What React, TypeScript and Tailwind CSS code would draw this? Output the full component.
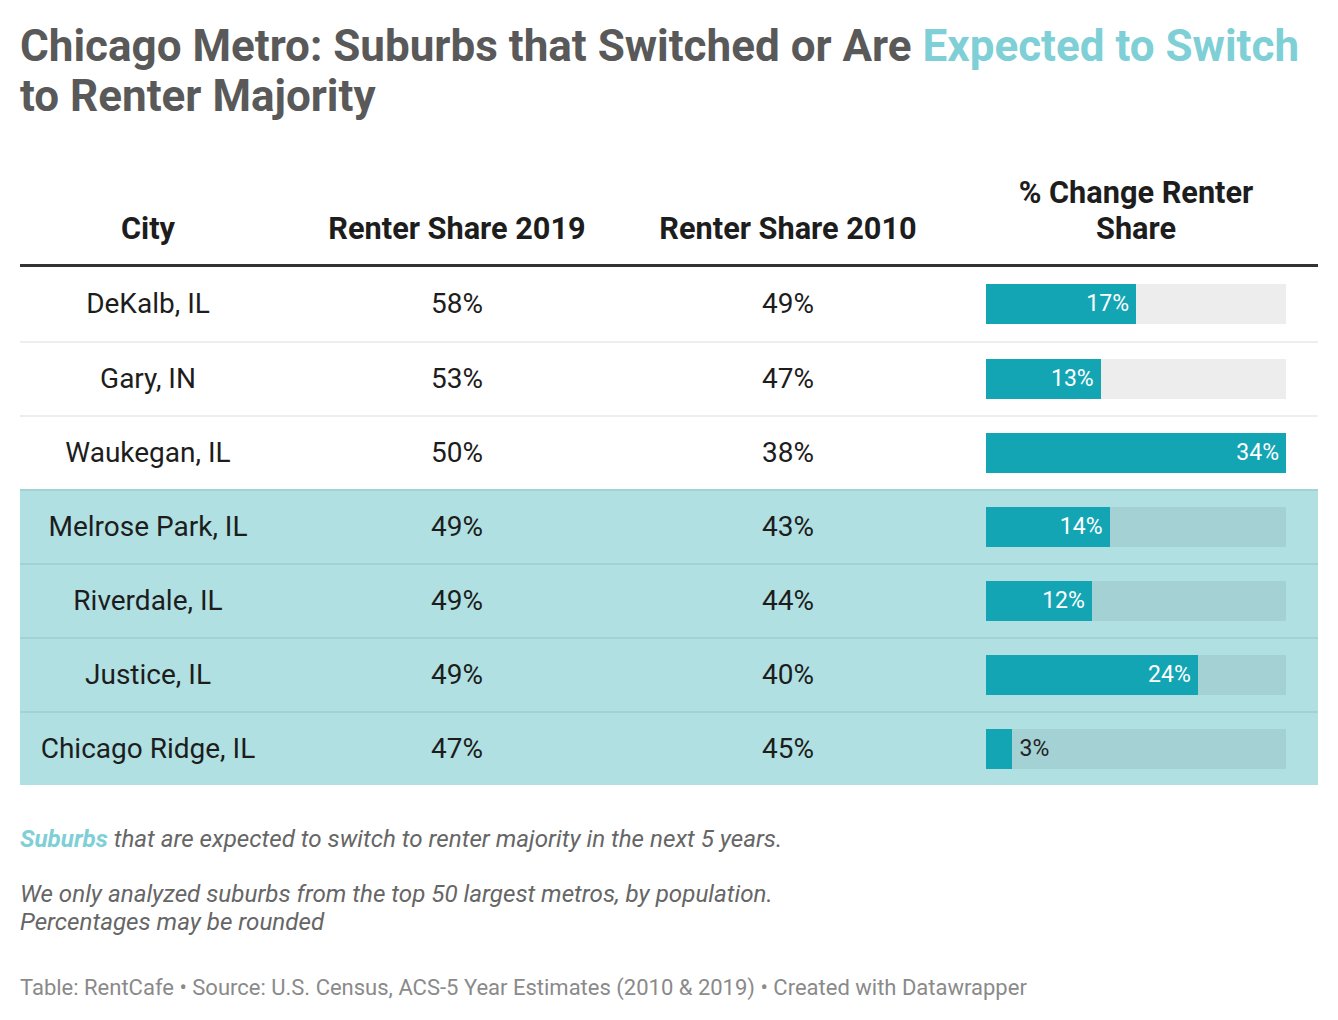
import React from "react";

interface Row {
  city: string;
  share2019: string;
  share2010: string;
  change: number;
  expected: boolean;
}

const rows: Row[] = [
  { city: "DeKalb, IL", share2019: "58%", share2010: "49%", change: 17, expected: false },
  { city: "Gary, IN", share2019: "53%", share2010: "47%", change: 13, expected: false },
  { city: "Waukegan, IL", share2019: "50%", share2010: "38%", change: 34, expected: false },
  { city: "Melrose Park, IL", share2019: "49%", share2010: "43%", change: 14, expected: true },
  { city: "Riverdale, IL", share2019: "49%", share2010: "44%", change: 12, expected: true },
  { city: "Justice, IL", share2019: "49%", share2010: "40%", change: 24, expected: true },
  { city: "Chicago Ridge, IL", share2019: "47%", share2010: "45%", change: 3, expected: true },
];

const MAX = 34;

const Bar: React.FC<{ value: number; expected: boolean }> = ({ value, expected }) => {
  const pct = (value / MAX) * 100;
  const inside = value >= 8;
  return (
    <div
      className={`ml-[48px] flex h-[40px] w-[300px] ${
        expected ? "bg-[#a3d1d4]" : "bg-[#ededed]"
      }`}
    >
      <div
        className="flex h-full items-center justify-end bg-[#14a5b4] pr-[7px] text-white"
        style={{ width: `${pct}%` }}
      >
        {inside && `${value}%`}
      </div>
      {!inside && <div className="flex h-full items-center pl-[7px] text-[#222]">{value}%</div>}
    </div>
  );
};

export default function App() {
  return (
    <div className="min-h-[1020px] bg-white px-[20px] pt-[21px] font-['Roboto',sans-serif]">
      <h1 className="text-[44px] font-bold leading-[50px] text-[#595959]">
        Chicago Metro: Suburbs that Switched or Are{" "}
        <span className="text-[#7ecfd6]">Expected to Switch</span> to Renter Majority
      </h1>

      <div className="mt-[54px] w-[1298px]">
        <div className="grid grid-cols-[256px_362px_300px_380px] items-end border-b-[3px] border-[#333] pb-[17px] text-[30.7px] font-bold leading-[36px] text-[#1d1d1d]">
          <div className="text-center">City</div>
          <div className="text-center">Renter Share 2019</div>
          <div className="text-center">Renter Share 2010</div>
          <div className="pl-[48px] pr-[32px] text-center">
            % Change Renter
            <br />
            Share
          </div>
        </div>

        {rows.map((r, i) => (
          <div
            key={r.city}
            className={`grid h-[74px] grid-cols-[256px_362px_300px_380px] items-center text-[28px] text-[#1d1d1d] ${
              r.expected ? "bg-[#b0e0e2]" : "bg-white"
            } ${
              i === 0
                ? ""
                : r.expected
                ? "border-t-[2px] border-[#a2d2d4]"
                : "border-t-[2px] border-[#eeeeee]"
            }`}
          >
            <div className="text-center">{r.city}</div>
            <div className="text-center">{r.share2019}</div>
            <div className="text-center">{r.share2010}</div>
            <div className="text-[23px]">
              <Bar value={r.change} expected={r.expected} />
            </div>
          </div>
        ))}
      </div>

      <div className="mt-[40px] text-[24.2px] italic leading-[28px] text-[#666]">
        <p>
          <span className="font-bold text-[#7ecfd6]">Suburbs</span> that are expected to switch to
          renter majority in the next 5 years.
        </p>
        <p className="mt-[27px]">
          We only analyzed suburbs from the top 50 largest metros, by population.
          <br />
          Percentages may be rounded
        </p>
      </div>

      <p className="mt-[35px] text-[22px] text-[#8a8a8a]">
        Table: RentCafe • Source: U.S. Census, ACS-5 Year Estimates (2010 &amp; 2019) • Created with
        Datawrapper
      </p>
    </div>
  );
}
